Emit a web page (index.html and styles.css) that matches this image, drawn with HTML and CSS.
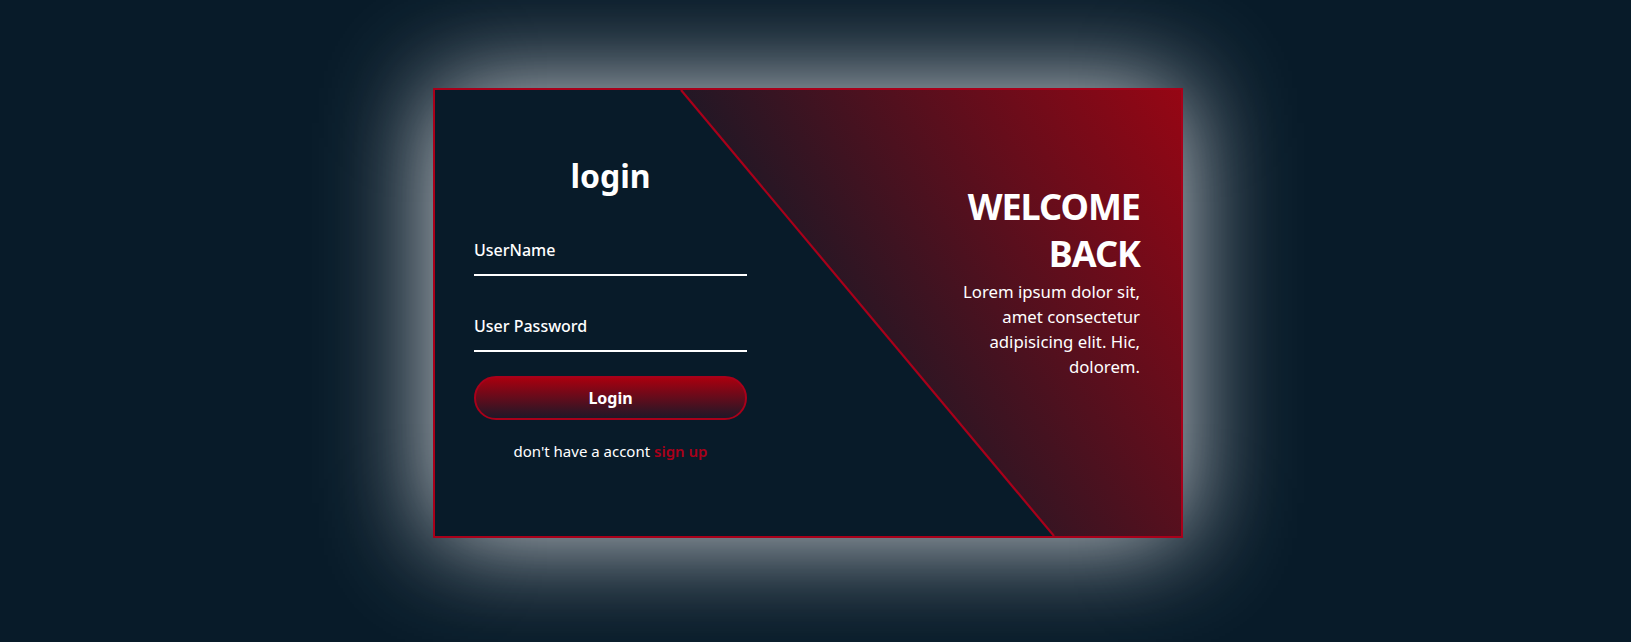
FILE: index.html
```html
<!DOCTYPE html>
<html lang="en">
<head>
<meta charset="UTF-8">
<title>Login</title>
<link rel="stylesheet" href="styles.css">
</head>
<body>
<main class="page">
  <div class="card">
    <div class="shape"></div>
    <svg class="diag" viewBox="0 0 746 446" preserveAspectRatio="none" aria-hidden="true">
      <line x1="246" y1="0" x2="619" y2="446" stroke="#a8001a" stroke-width="2.2"/>
    </svg>
    <form class="form-box">
      <h2 class="title">login</h2>
      <div class="input-box"><label>UserName</label></div>
      <div class="input-box"><label>User Password</label></div>
      <button type="button" class="btn">Login</button>
      <p class="switch">don't have a accont <a href="#" class="link">sign up</a></p>
    </form>
    <div class="info">
      <h2 class="info-title">WELCOME BACK</h2>
      <p class="info-text">Lorem ipsum dolor sit, amet consectetur adipisicing elit. Hic, dolorem.</p>
    </div>
  </div>
</main>
</body>
</html>
```

FILE: styles.css
```css
* { box-sizing: border-box; margin: 0; padding: 0; }
html, body { height: 100%; }
body {
  background: #081b29;
  font-family: "Noto Sans", "Open Sans", sans-serif;
  color: #fff;
}
.page {
  min-height: 100vh;
  display: flex;
  align-items: center;
  justify-content: center;
}
.card {
  position: relative;
  width: 750px;
  height: 450px;
  margin: 0 15px 16px 0;
  border: 2px solid #a8001a;
  background: #081b29;
  box-shadow: 0 0 100px #d4d7db;
  overflow: hidden;
  display: flex;
  justify-content: space-between;
}
.shape {
  position: absolute;
  inset: 0;
  background: linear-gradient(58deg, #081b29 40%, #960614 100%);
  clip-path: polygon(246px 0, 100% 0, 100% 100%, 619px 100%);
}
.diag {
  position: absolute;
  inset: 0;
  width: 100%;
  height: 100%;
}
.form-box {
  position: relative;
  width: 273px;
  margin-left: 39px;
  padding-top: 64px;
  display: flex;
  flex-direction: column;
}
.title {
  font-size: 32px;
  line-height: 44px;
  font-weight: 700;
  text-align: center;
  margin-bottom: 28px;
}
.input-box {
  height: 50px;
  border-bottom: 2px solid #fff;
  display: flex;
  align-items: center;
}
.input-box + .input-box { margin-top: 26px; }
.input-box label {
  font-size: 16px;
  line-height: 24px;
  font-weight: 500;
}
.btn {
  margin-top: 24px;
  height: 44px;
  width: 100%;
  border: 2px solid #a8001a;
  border-radius: 40px;
  background: linear-gradient(to bottom, #a8000f, #1e1828);
  color: #fff;
  font-family: inherit;
  font-size: 16px;
  font-weight: 700;
  cursor: pointer;
}
.switch {
  margin-top: 20px;
  font-size: 15px;
  line-height: 22px;
  text-align: center;
}
.link {
  color: #a8001a;
  font-weight: 600;
  text-decoration: none;
}
.info {
  position: relative;
  width: 200px;
  margin-right: 41px;
  padding-top: 93px;
  text-align: right;
}
.info-title {
  font-size: 36px;
  line-height: 47px;
  font-weight: 700;
  letter-spacing: -1px;
  text-transform: uppercase;
}
.info-text {
  margin-top: 2px;
  margin-left: auto;
  max-width: 192px;
  font-size: 16.75px;
  line-height: 25px;
}
```
